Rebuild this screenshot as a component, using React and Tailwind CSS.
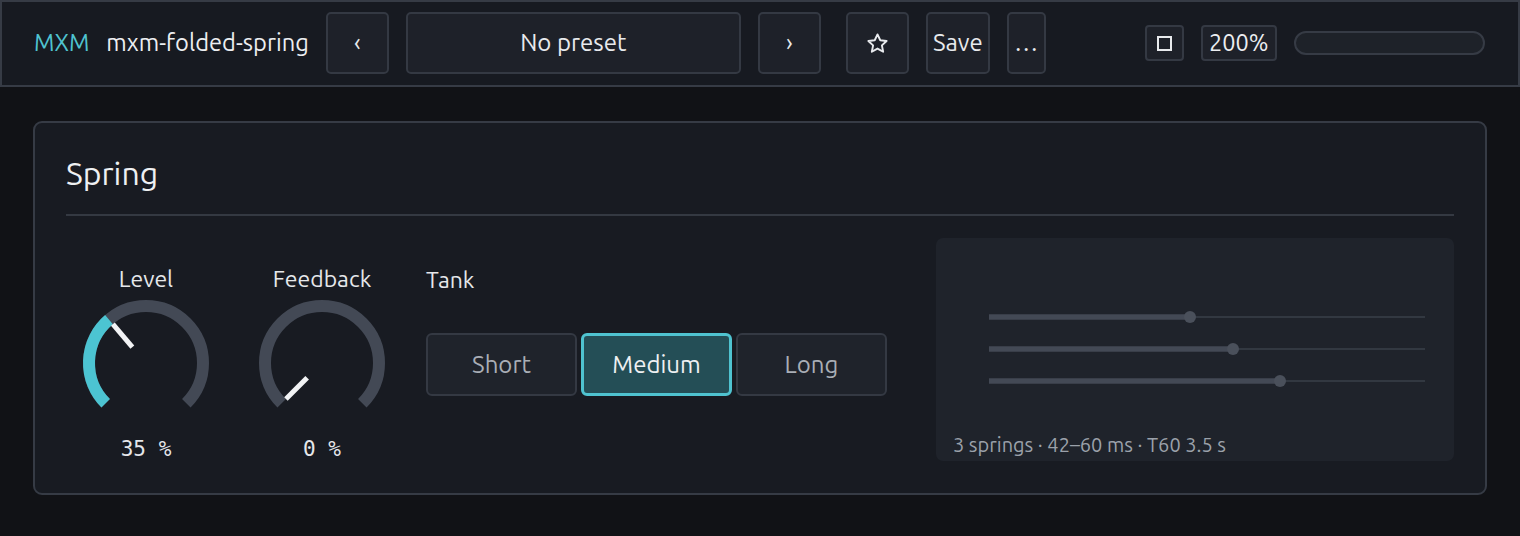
import React from 'react';

const SANS = { fontFamily: '"Ubuntu", "Noto Sans", "Open Sans", sans-serif' };
const MONO = { fontFamily: '"DejaVu Sans Mono", "Liberation Mono", monospace' };

const polar = (cx, cy, r, deg) => {
  const a = ((deg - 90) * Math.PI) / 180;
  return [cx + r * Math.cos(a), cy + r * Math.sin(a)];
};

const arc = (cx, cy, r, from, to) => {
  const [x1, y1] = polar(cx, cy, r, from);
  const [x2, y2] = polar(cx, cy, r, to);
  const large = to - from > 180 ? 1 : 0;
  return `M ${x1} ${y1} A ${r} ${r} 0 ${large} 1 ${x2} ${y2}`;
};

const Knob = ({ label, value }) => {
  const end = -135 + (value / 100) * 270;
  const [px1, py1] = polar(64, 64, 51, end);
  const [px2, py2] = polar(64, 64, 21, end);
  return (
    <div className="flex flex-col items-center w-[128px]">
      <div className="text-[23px] leading-[28px] text-[#e6e8eb]" style={SANS}>
        {label}
      </div>
      <svg width="128" height="128" viewBox="0 0 128 128" className="mt-[6px]">
        <path d={arc(64, 64, 57, -135, 135)} fill="none" stroke="#434955" strokeWidth="12" />
        {value > 0 && (
          <path d={arc(64, 64, 57, -135, end)} fill="none" stroke="#4cc4d2" strokeWidth="12" />
        )}
        <line x1={px1} y1={py1} x2={px2} y2={py2} stroke="#f2f3f5" strokeWidth="5" />
      </svg>
      <div className="mt-[9px] text-[21px] leading-[26px] text-[#e5e7eb] whitespace-pre" style={MONO}>
        {value} %
      </div>
    </div>
  );
};

const HeadBtn = ({ children, className = '' }) => (
  <button
    className={`h-[62px] flex items-center justify-center rounded-[5px] border-2 border-[#343943] bg-[#1e2129] text-[#e8eaed] text-[24px] ${className}`}
    style={SANS}
  >
    {children}
  </button>
);

const Springs = () => {
  const rows = [
    { y: 79, t: 1189 - 935 },
    { y: 111, t: 1232 - 935 },
    { y: 143, t: 1279 - 935 },
  ];
  return (
    <svg width="518" height="223" viewBox="0 0 518 223" className="absolute inset-0">
      {rows.map((r) => (
        <g key={r.y}>
          <line x1="489" y1={r.y} x2={r.t} y2={r.y} stroke="#3a404a" strokeWidth="1.5" />
          <line x1="53" y1={r.y} x2={r.t} y2={r.y} stroke="#434955" strokeWidth="5.5" />
          <circle cx={r.t} cy={r.y} r="6" fill="#4a505b" />
        </g>
      ))}
    </svg>
  );
};

export default function App() {
  return (
    <div className="w-[1520px] h-[536px] bg-[#111216] overflow-hidden" style={SANS}>
      <header className="h-[87px] border-2 border-[#363b45] bg-[#171a21] flex items-center pl-[32px] pb-[1px]">
        <span className="text-[23.5px] text-[#4fc3d0]">MXM</span>
        <span className="ml-[17px] text-[23.7px] text-[#eceef1]">mxm-folded-spring</span>
        <HeadBtn className="ml-[17px] w-[63px]">‹</HeadBtn>
        <HeadBtn className="ml-[17px] w-[335px]">No preset</HeadBtn>
        <HeadBtn className="ml-[17px] w-[63px]">›</HeadBtn>
        <HeadBtn className="ml-[25px] w-[63px]">
          <svg width="23" height="23" viewBox="0 0 24 24" fill="none" stroke="#e8eaed" strokeWidth="2" strokeLinejoin="round">
            <path d="M12 2.5l2.9 6.1 6.6.8-4.9 4.6 1.3 6.6L12 17.3l-5.9 3.3 1.3-6.6-4.9-4.6 6.6-.8z" />
          </svg>
        </HeadBtn>
        <HeadBtn className="ml-[17px] w-[64px]">Save</HeadBtn>
        <HeadBtn className="ml-[17px] w-[39px]">…</HeadBtn>
        <div className="ml-[99px] h-[36px] w-[39px] flex items-center justify-center rounded-[4px] border-2 border-[#343943] bg-[#1e2129]">
          <div className="w-[15px] h-[15px] border-2 border-[#e8eaed]" />
        </div>
        <div className="ml-[17px] h-[36px] w-[76px] flex items-center justify-center rounded-[4px] border-2 border-[#343943] bg-[#1e2129] text-[23.5px] text-[#eceef1]">
          200%
        </div>
        <div className="ml-[17px] h-[24px] w-[191px] rounded-full border-2 border-[#363b45] bg-[#1e2229]" />
      </header>

      <div className="px-[33px] pt-[34px]">
        <section className="h-[374px] rounded-[9px] border-2 border-[#363b45] bg-[#181b22] px-[31px] pt-[30px]">
          <h2 className="text-[32px] leading-[40px] text-[#eef0f2]">Spring</h2>
          <div className="mt-[21px] h-[2px] bg-[#343942]" />
          <div className="mt-[22px] flex">
            <div className="flex pt-[27px] pl-[16px] gap-[48px]">
              <Knob label="Level" value={35} />
              <Knob label="Feedback" value={0} />
            </div>
            <div className="ml-[40px] pt-[28px]">
              <div className="text-[23px] leading-[28px] text-[#e6e8eb]">Tank</div>
              <div className="mt-[39px] flex gap-[4px]">
                <button className="w-[151px] h-[63px] rounded-[6px] border-2 border-[#343943] bg-[#1f232b] text-[24px] text-[#a9aeb6]">
                  Short
                </button>
                <button className="w-[151px] h-[63px] rounded-[6px] border-[3px] border-[#4fc3d0] bg-[#244e56] text-[24px] text-[#eef0f2]">
                  Medium
                </button>
                <button className="w-[151px] h-[63px] rounded-[6px] border-2 border-[#343943] bg-[#1f232b] text-[24px] text-[#a9aeb6]">
                  Long
                </button>
              </div>
            </div>
            <div className="ml-auto relative w-[518px] h-[223px] rounded-[7px] bg-[#1f232b]">
              <Springs />
              <div className="absolute left-[17px] bottom-[1px] text-[20px] text-[#9ba1aa]">
                3 springs · 42–60 ms · T60 3.5 s
              </div>
            </div>
          </div>
        </section>
      </div>
    </div>
  );
}
